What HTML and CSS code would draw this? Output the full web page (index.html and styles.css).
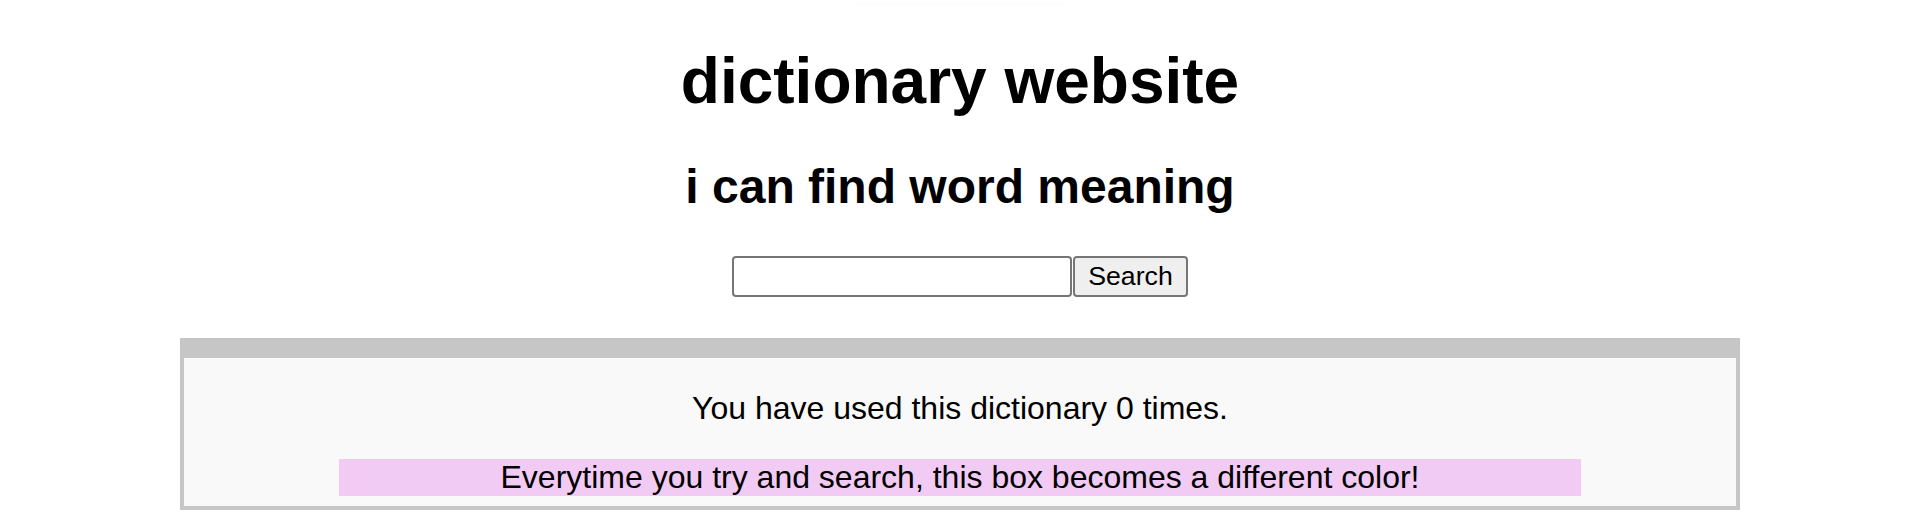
FILE: index.html
```html
<!DOCTYPE html>
<html lang="en">
<head>
<meta charset="utf-8">
<title>dictionary website</title>
<link rel="stylesheet" href="styles.css">
</head>
<body>
<div class="top-shadow"></div>
<h1 class="title">dictionary website</h1>
<h2 class="subtitle">i can find word meaning</h2>
<form class="search" onsubmit="return false;">
  <input class="search-input" type="text" aria-label="word">
  <button class="search-button" type="submit">Search</button>
</form>
<div class="panel">
  <p class="counter">You have used this dictionary 0 times.</p>
  <div class="color-box">Everytime you try and search, this box becomes a different color!</div>
</div>
</body>
</html>
```

FILE: styles.css
```css
html, body {
  background: #ffffff;
}
body {
  margin: 0 16px;
  font-family: "Liberation Sans", Arial, sans-serif;
  font-size: 32px;
  line-height: 1.15;
  color: #000000;
}
.top-shadow {
  width: 218px;
  height: 2px;
  margin: 0 auto;
  background: #ffffff;
  box-shadow: 0 0 8px rgba(0, 0, 0, 0.05);
}
.title {
  margin: 43px 0 40px;
  font-size: 64px;
  font-weight: bold;
  text-align: center;
  line-height: 1.15;
}
.subtitle {
  margin: 40px 0 42px;
  font-size: 48px;
  font-weight: bold;
  text-align: center;
  line-height: 1.15;
}
.search {
  display: flex;
  justify-content: center;
  gap: 1px;
  margin: 0 0 41px;
}
.search-input {
  box-sizing: border-box;
  width: 340px;
  height: 41px;
  margin: 0;
  padding: 2px 4px;
  border: 2px solid #767676;
  border-radius: 4px;
  background: #ffffff;
  font-family: "Liberation Sans", Arial, sans-serif;
  font-size: 26.67px;
}
.search-button {
  box-sizing: border-box;
  width: 115px;
  height: 41px;
  margin: 0;
  padding: 0 12px;
  border: 2px solid #767676;
  border-radius: 4px;
  background: #efefef;
  color: #000000;
  font-family: "Liberation Sans", Arial, sans-serif;
  font-size: 26.67px;
  line-height: 1;
}
.panel {
  margin: 0 164px;
  border: 4px solid #c6c6c6;
  border-top-width: 20px;
  background: #f9f9f9;
  padding: 0 0 10px;
  text-align: center;
}
.counter {
  margin: 32px 0;
  line-height: 37px;
}
.color-box {
  width: 80%;
  margin: 0 auto;
  background: #f2cbf5;
  line-height: 37px;
}
```
